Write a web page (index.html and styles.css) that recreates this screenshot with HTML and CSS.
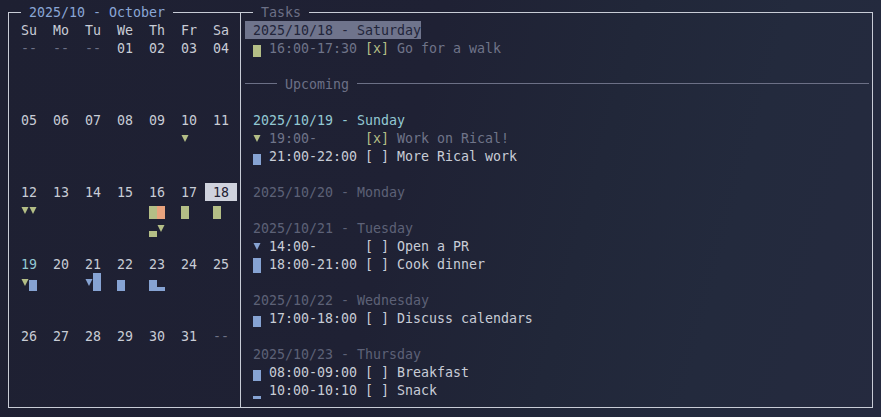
FILE: index.html
```html
<!DOCTYPE html>
<html>
<head>
<meta charset="utf-8">
<link rel="stylesheet" href="styles.css">
</head>
<body>
<div class="frame">
  <section class="panel cal">
    <div class="head"><span class="ln lead"></span><span class="title blue">2025/10 - October</span><span class="ln fill"></span></div>
    <div class="cal-grid">
      <div class="dow">Su</div><div class="dow">Mo</div><div class="dow">Tu</div><div class="dow">We</div><div class="dow">Th</div><div class="dow">Fr</div><div class="dow">Sa</div>

      <div class="day"><div class="num dim">--</div></div>
      <div class="day"><div class="num dim">--</div></div>
      <div class="day"><div class="num dim">--</div></div>
      <div class="day"><div class="num">01</div></div>
      <div class="day"><div class="num">02</div></div>
      <div class="day"><div class="num">03</div></div>
      <div class="day"><div class="num">04</div></div>

      <div class="day"><div class="num">05</div></div>
      <div class="day"><div class="num">06</div></div>
      <div class="day"><div class="num">07</div></div>
      <div class="day"><div class="num">08</div></div>
      <div class="day"><div class="num">09</div></div>
      <div class="day"><div class="num">10</div><div class="mk"><span class="tri y"></span></div></div>
      <div class="day"><div class="num">11</div></div>

      <div class="day"><div class="num">12</div><div class="mk"><span class="tri y"></span><span class="tri y"></span></div></div>
      <div class="day"><div class="num">13</div></div>
      <div class="day"><div class="num">14</div></div>
      <div class="day"><div class="num">15</div></div>
      <div class="day"><div class="num">16</div>
        <div class="mk"><span class="bar g" style="height:13px"></span><span class="bar o" style="height:13px"></span></div>
        <div class="mk"><span class="bar g" style="height:6px"></span><span class="tri y"></span></div>
      </div>
      <div class="day"><div class="num">17</div><div class="mk"><span class="bar g" style="height:13px"></span></div></div>
      <div class="day"><div class="num sel">18</div><div class="mk"><span class="bar g" style="height:13px"></span></div></div>

      <div class="day"><div class="num teal">19</div><div class="mk"><span class="tri y"></span><span class="bar b" style="height:11px"></span></div></div>
      <div class="day"><div class="num">20</div></div>
      <div class="day"><div class="num">21</div><div class="mk"><span class="tri bl"></span><span class="bar b" style="height:18px"></span></div></div>
      <div class="day"><div class="num">22</div><div class="mk"><span class="bar b" style="height:11px"></span></div></div>
      <div class="day"><div class="num">23</div><div class="mk"><span class="bar b" style="height:11px"></span><span class="bar b" style="height:4px"></span></div></div>
      <div class="day"><div class="num">24</div></div>
      <div class="day"><div class="num">25</div></div>

      <div class="day"><div class="num">26</div></div>
      <div class="day"><div class="num">27</div></div>
      <div class="day"><div class="num">28</div></div>
      <div class="day"><div class="num">29</div></div>
      <div class="day"><div class="num">30</div></div>
      <div class="day"><div class="num">31</div></div>
      <div class="day"><div class="num dim">--</div></div>
    </div>
  </section>

  <section class="panel tasks">
    <div class="head"><span class="ln lead2"></span><span class="title grey">Tasks</span><span class="ln fill"></span></div>
    <div class="list">
      <div class="row"><span class="hl"> 2025/10/18 - Saturday</span></div>
      <div class="task"><span class="mark"><span class="bar g" style="height:12px"></span></span><span class="txt"><span class="done">16:00-17:30</span> <span class="yel">[x]</span> <span class="done">Go for a walk</span></span></div>
      <div class="row"></div>
      <div class="sep"><span class="sl lead3"></span><span class="stitle">Upcoming</span><span class="sl fill2"></span></div>
      <div class="row"></div>
      <div class="row date teal">2025/10/19 - Sunday</div>
      <div class="task"><span class="mark"><span class="tri y"></span></span><span class="txt"><span class="done">19:00-     </span> <span class="yel">[x]</span> <span class="done">Work on Rical!</span></span></div>
      <div class="task"><span class="mark"><span class="bar b" style="height:11px"></span></span><span class="txt">21:00-22:00 [ ] More Rical work</span></div>
      <div class="row"></div>
      <div class="row date dimd">2025/10/20 - Monday</div>
      <div class="row"></div>
      <div class="row date dimd">2025/10/21 - Tuesday</div>
      <div class="task"><span class="mark"><span class="tri bl"></span></span><span class="txt">14:00-      [ ] Open a PR</span></div>
      <div class="task"><span class="mark"><span class="bar b" style="height:15px"></span></span><span class="txt">18:00-21:00 [ ] Cook dinner</span></div>
      <div class="row"></div>
      <div class="row date dimd">2025/10/22 - Wednesday</div>
      <div class="task"><span class="mark"><span class="bar b" style="height:11px"></span></span><span class="txt">17:00-18:00 [ ] Discuss calendars</span></div>
      <div class="row"></div>
      <div class="row date dimd">2025/10/23 - Thursday</div>
      <div class="task"><span class="mark"><span class="bar b" style="height:11px"></span></span><span class="txt">08:00-09:00 [ ] Breakfast</span></div>
      <div class="task"><span class="mark"><span class="bar b" style="height:3px"></span></span><span class="txt">10:00-10:10 [ ] Snack</span></div>
    </div>
  </section>
</div>
</body>
</html>
```

FILE: styles.css
```css
html, body {
  margin: 0;
  padding: 0;
}
body {
  width: 881px;
  height: 417px;
  overflow: hidden;
  background: linear-gradient(105deg, #1e2032 0%, #1f2134 45%, #212739 65%, #232a3d 80%, #252a3f 100%);
  font-family: "DejaVu Sans Mono", monospace;
  font-size: 13.29px;
  line-height: 20px;
  color: #c8ccd6;
}
.frame {
  display: flex;
  margin: 12px 0 0 8px;
  width: 865px;
  height: 396px;
}
.panel {
  display: flex;
  flex-direction: column;
  border-bottom: 1px solid #c8ccd6;
  box-sizing: border-box;
  height: 396px;
}
.cal {
  width: 233px;
  border-left: 1px solid #c8ccd6;
  border-right: 1px solid #c8ccd6;
}
.tasks {
  flex: 1;
  border-right: 1px solid #c8ccd6;
}
.head {
  display: flex;
  align-items: flex-start;
  height: 18px;
  margin-top: -9px;
}
.cal .head {
  margin-left: -1px;
}
.ln {
  height: 1px;
  margin-top: 9px;
  background: #c8ccd6;
}
.lead { width: 13px; }
.lead2 { width: 12px; }
.fill { flex: 1; }
.title {
  height: 18px;
  padding: 0 8px;
  white-space: pre;
}
.blue { color: #8aa6d6; }
.grey { color: #6c7086; }

.cal-grid {
  display: grid;
  grid-template-columns: repeat(7, 32px);
  padding-left: 4px;
}
.dow {
  height: 18px;
  padding-left: 8px;
}
.day {
  height: 72px;
}
.num {
  height: 18px;
  padding-left: 8px;
  white-space: pre;
}
.num.sel {
  background: #cfd2dd;
  color: #1f2133;
}
.dim { color: #6c7086; }
.teal { color: #93c8d3; }
.mk {
  display: flex;
  align-items: flex-end;
  height: 18px;
  padding-left: 8px;
}
.bar {
  display: block;
  width: 8px;
}
.bar.g { background: #b4be86; }
.bar.o { background: #e8a37e; }
.bar.b { background: #86a3d3; }
.tri {
  display: block;
  width: 8px;
  height: 7px;
  align-self: flex-start;
  margin-top: 6px;
  clip-path: polygon(6% 0, 94% 0, 50% 100%);
}
.tri.y { background: #b4be86; }
.tri.bl { background: #86a3d3; }

.list {
  padding-left: 4px;
}
.row {
  height: 18px;
  white-space: pre;
}
.hl {
  display: inline-block;
  height: 18px;
  vertical-align: top;
  background: #6f748c;
  color: #22253a;
}
.date {
  padding-left: 8px;
}
.dimd { color: #5d6177; }
.task {
  display: flex;
  height: 18px;
  padding-left: 8px;
}
.mark {
  display: flex;
  align-items: flex-end;
  width: 8px;
  height: 18px;
}
.txt {
  margin-left: 8px;
  white-space: pre;
}
.done { color: #6f7489; }
.yel { color: #b4be86; }
.sep {
  display: flex;
  align-items: flex-start;
  height: 18px;
  margin-right: 3px;
}
.sl {
  height: 1px;
  margin-top: 8px;
  background: #6c7086;
}
.lead3 { width: 32px; }
.fill2 { flex: 1; }
.stitle {
  height: 18px;
  padding: 0 8px;
  color: #6c7086;
}
```
